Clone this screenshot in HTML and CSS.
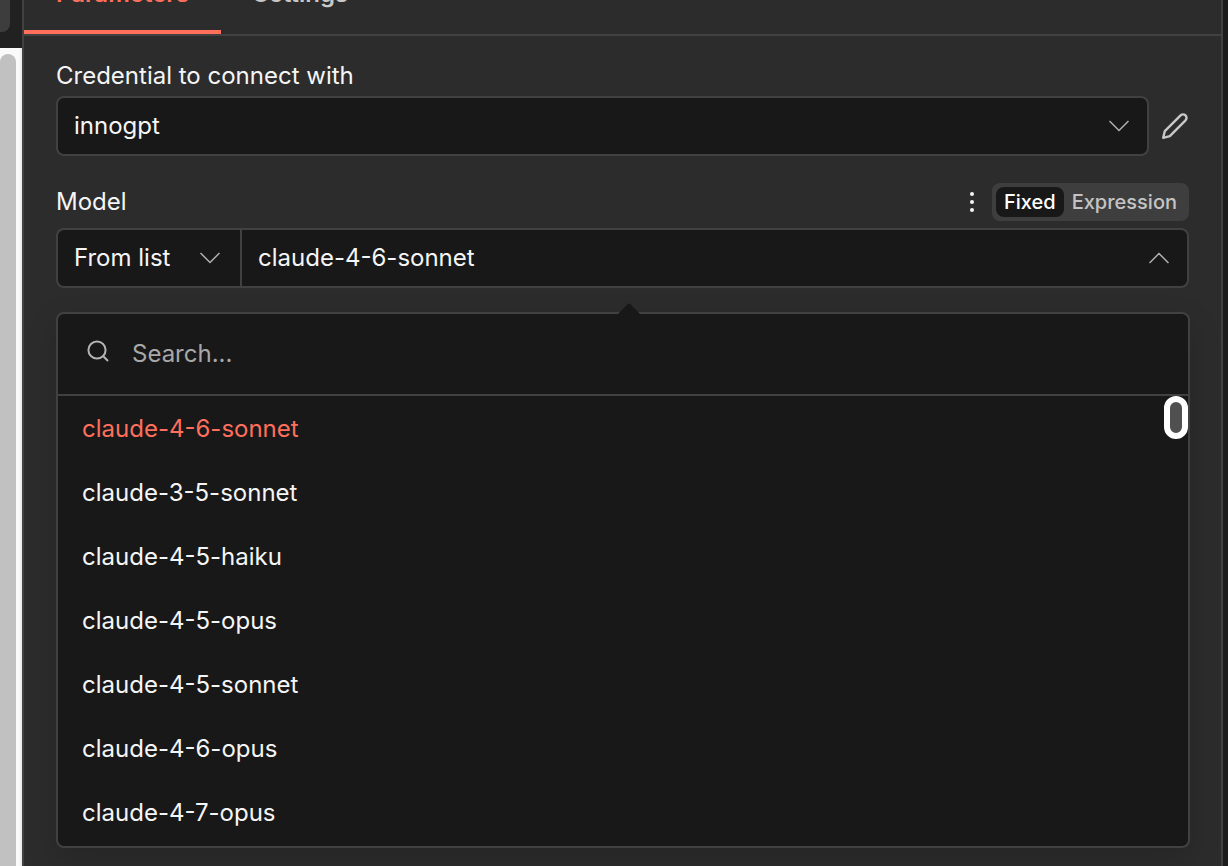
FILE: index.html
```html
<!DOCTYPE html>
<html lang="en">
<head>
    <meta charset="UTF-8">
    <meta name="viewport" content="width=device-width, initial-scale=1.0">
    <title>Node Parameters</title>
    <link rel="stylesheet" href="styles.css">
</head>
<body>
    <div class="app">
        <aside class="side">
            <div class="side-head">
                <div class="side-button"></div>
            </div>
            <div class="side-body">
                <div class="side-thumb"></div>
            </div>
        </aside>

        <main class="panel">
            <nav class="tabs">
                <a href="#parameters" class="tab active">Parameters</a>
                <a href="#settings" class="tab">Settings</a>
            </nav>

            <div class="params">
                <label class="label" for="credential">Credential to connect with</label>
                <div class="credential-row">
                    <div class="field credential-field">
                        <select id="credential" class="control">
                            <option>innogpt</option>
                        </select>
                        <svg class="chevron" viewBox="0 0 20 12" aria-hidden="true"><path d="M0.5 1 L10 10.5 L19.5 1"/></svg>
                    </div>
                    <button class="edit-btn" aria-label="Edit credential">
                        <svg viewBox="0 0 26 26" aria-hidden="true"><path d="M1.2 24.8 L2.8 18.2 L18.6 2.4 A3.4 3.4 0 0 1 23.5 7.3 L7.8 23.1 Z"/></svg>
                    </button>
                </div>

                <div class="model-head">
                    <label class="label" for="model">Model</label>
                    <button class="more-btn" aria-label="More options">
                        <svg viewBox="0 0 4 20" aria-hidden="true"><circle cx="2" cy="2" r="2"/><circle cx="2" cy="10" r="2"/><circle cx="2" cy="18" r="2"/></svg>
                    </button>
                    <div class="toggle">
                        <button class="toggle-btn selected">Fixed</button>
                        <button class="toggle-btn">Expression</button>
                    </div>
                </div>

                <div class="model-row">
                    <div class="field mode-field">
                        <select class="control" aria-label="Model source">
                            <option>From list</option>
                        </select>
                        <svg class="chevron" viewBox="0 0 20 12" aria-hidden="true"><path d="M0.5 1 L10 10.5 L19.5 1"/></svg>
                    </div>
                    <div class="field model-field">
                        <input id="model" class="control" type="text" value="claude-4-6-sonnet" readonly>
                        <svg class="chevron" viewBox="0 0 20 12" aria-hidden="true"><path d="M0.5 11 L10 1.5 L19.5 11"/></svg>
                    </div>
                </div>

                <div class="dropdown">
                    <svg class="arrow" viewBox="0 0 24 12" aria-hidden="true"><path d="M0 12 L10.5 1.2 Q12 0 13.5 1.2 L24 12 Z"/></svg>
                    <div class="search">
                        <svg class="search-icon" viewBox="0 0 22 22" aria-hidden="true"><circle cx="10" cy="10" r="8.6"/><path d="M16.3 16.3 L21 21"/></svg>
                        <input class="search-input" type="text" placeholder="Search..." aria-label="Search models">
                    </div>
                    <div class="list">
                        <button class="item current">claude-4-6-sonnet</button>
                        <button class="item">claude-3-5-sonnet</button>
                        <button class="item">claude-4-5-haiku</button>
                        <button class="item">claude-4-5-opus</button>
                        <button class="item">claude-4-5-sonnet</button>
                        <button class="item">claude-4-6-opus</button>
                        <button class="item">claude-4-7-opus</button>
                        <div class="list-thumb"></div>
                    </div>
                </div>
            </div>
        </main>
    </div>
</body>
</html>
```
FILE: styles.css
```css
* {
    margin: 0;
    padding: 0;
    box-sizing: border-box;
}

body {
    font-family: Inter, 'Liberation Sans', sans-serif;
    font-size: 24px;
    line-height: 32px;
    color: #f5f5f5;
    background: #1c1c1c;
    overflow: hidden;
}

button, input, select {
    font: inherit;
    color: inherit;
    background: none;
    border: none;
    outline: none;
}

button {
    cursor: pointer;
}

svg {
    display: block;
    fill: none;
}

.app {
    display: flex;
    height: 100vh;
    padding-right: 5px;
}

/* Strip of the canvas left of the panel */
.side {
    display: flex;
    flex-direction: column;
    width: 22px;
}

.side-head {
    height: 48px;
    background: #212121;
}

.side-button {
    width: 10px;
    height: 32px;
    background: #3d3d3d;
    border-radius: 0 0 8px 0;
}

.side-body {
    flex: 1;
    padding-top: 6px;
    background: #fafafa;
    border-right: 2px solid #ededed;
}

.side-thumb {
    width: 16px;
    height: 100%;
    background: #c1c1c1;
    border-radius: 8px 8px 0 0;
}

.panel {
    flex: 1;
    min-width: 0;
    background: #2c2c2c;
    border: 2px solid #414141;
    border-width: 0 2px;
}

/* Tabs, scrolled partly out of view */
.tabs {
    display: flex;
    margin-top: -24px;
    border-bottom: 2px solid #414141;
}

.tab {
    height: 58px;
    padding: 2px 32px 0;
    font-weight: 600;
    color: #c8c8c8;
    text-decoration: none;
}

.tab.active {
    color: #ff6f5c;
    border-bottom: 4px solid #ff6f5c;
}

.params {
    padding: 24px 32px;
}

.label {
    display: block;
}

.credential-row {
    display: flex;
    margin-top: 4px;
}

.field {
    position: relative;
    height: 60px;
    background: #181818;
    border: 2px solid #414141;
    border-radius: 8px;
}

.control {
    display: block;
    width: 100%;
    height: 100%;
    padding: 0 56px 0 16px;
    appearance: none;
}

.chevron {
    position: absolute;
    top: 22px;
    right: 18px;
    width: 20px;
    height: 12px;
    stroke: #b0b0b0;
    stroke-width: 1.5;
    pointer-events: none;
}

.credential-field {
    flex: 1;
}

.edit-btn {
    display: flex;
    align-items: center;
    justify-content: flex-end;
    width: 40px;
    padding-right: 1px;
}

.edit-btn svg {
    width: 26px;
    height: 26px;
    stroke: #c8c8c8;
    stroke-width: 2.4;
    stroke-linejoin: round;
}

.model-head {
    display: flex;
    align-items: center;
    margin: 27px 0 7px;
}

.more-btn {
    padding: 8px;
    margin: 0 10px 0 auto;
}

.more-btn svg {
    width: 4px;
    height: 20px;
    fill: #f5f5f5;
}

.toggle {
    display: flex;
    padding: 4px;
    background: #3e3e3e;
    border-radius: 8px;
}

.toggle-btn {
    height: 30px;
    padding: 0 8px;
    font-size: 20px;
    font-weight: 500;
    line-height: 30px;
    color: #c4c4c4;
    border-radius: 8px;
}

.toggle-btn.selected {
    color: #fff;
    background: #181818;
}

.model-row {
    display: flex;
}

.mode-field {
    width: 184px;
    border-right: none;
    border-radius: 8px 0 0 8px;
}

.mode-field .chevron {
    right: 20px;
}

.model-field {
    flex: 1;
    border-radius: 0 8px 8px 0;
}

.model-field .control {
    padding-bottom: 2px;
}

.dropdown {
    position: relative;
    margin: 24px -1px 0 0;
    background: #181818;
    border: 2px solid #414141;
    border-radius: 8px;
    box-shadow: 0 12px 32px rgba(0, 0, 0, 0.15);
}

.arrow {
    position: absolute;
    top: -11px;
    left: 50%;
    width: 24px;
    height: 12px;
    margin-left: -6px;
    fill: #181818;
}

.search {
    display: flex;
    align-items: center;
    height: 82px;
    padding: 0 29px;
    border-bottom: 2px solid #414141;
}

.search-icon {
    width: 22px;
    height: 22px;
    margin: 0 23px 6px 0;
    stroke: #b4b4b4;
    stroke-width: 2;
}

.search-input {
    flex: 1;
    min-width: 0;
}

.search-input::placeholder {
    color: #a8a8a8;
}

.list {
    position: relative;
    height: 450px;
    overflow: hidden;
}

.item {
    display: block;
    width: 100%;
    height: 64px;
    padding: 2px 24px 0;
    text-align: left;
}

.item.current {
    color: #ff6f5c;
}

.list-thumb {
    position: absolute;
    top: 0;
    right: 0;
    width: 24px;
    height: 43px;
    background: #505050;
    border: 6px solid #fff;
    border-radius: 12px;
}
```
